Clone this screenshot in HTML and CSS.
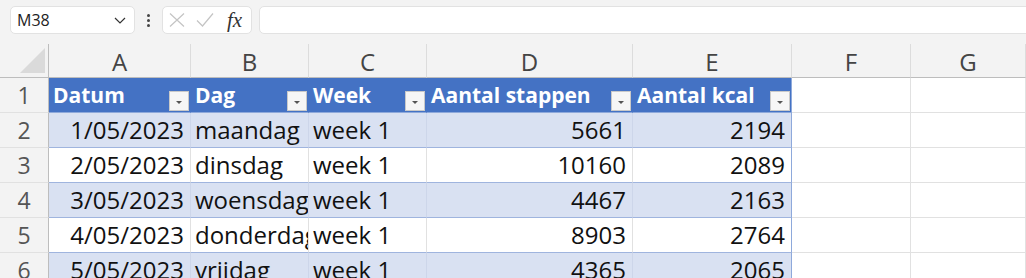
FILE: index.html
```html
<!DOCTYPE html>
<html lang="nl">
<head>
  <meta charset="UTF-8">
  <link rel="stylesheet" href="styles.css">
  <title>Stappen</title>
</head>
<body>
  <div class="toolbar">
    <div class="namebox">
      <span>M38</span>
      <svg width="12" height="7" viewBox="0 0 12 7"><path d="M1 1l5 5 5-5" fill="none" stroke="#333" stroke-width="1.2"/></svg>
    </div>
    <div class="grip"><i></i><i></i><i></i></div>
    <div class="fxbox">
      <svg width="16" height="14" viewBox="0 0 16 14"><path d="M1 0.5l14 13M15 0.5l-14 13" stroke="#c4c4c4" stroke-width="1.2" fill="none"/></svg>
      <svg width="18" height="14" viewBox="0 0 18 14"><path d="M1 7.5l5.5 5.5 10.5-12.5" stroke="#c4c4c4" stroke-width="1.2" fill="none"/></svg>
      <span class="fx">fx</span>
    </div>
    <div class="formula"></div>
  </div>

  <div class="sheet">
    <div class="corner"><svg width="25" height="25" viewBox="0 0 25 25"><path d="M25 0v25h-25z" fill="#dadada"/></svg></div>
    <div class="colhead">A</div>
    <div class="colhead">B</div>
    <div class="colhead">C</div>
    <div class="colhead">D</div>
    <div class="colhead">E</div>
    <div class="colhead">F</div>
    <div class="colhead">G</div>

    <div class="rowhead">1</div>
    <div class="th">Datum<span class="dd"></span></div>
    <div class="th">Dag<span class="dd"></span></div>
    <div class="th">Week<span class="dd"></span></div>
    <div class="th">Aantal stappen<span class="dd"></span></div>
    <div class="th last">Aantal kcal<span class="dd"></span></div>
    <div class="out first"></div>
    <div class="out first"></div>

    <div class="rowhead">2</div>
    <div class="cell band num">1/05/2023</div>
    <div class="cell band">maandag</div>
    <div class="cell band">week 1</div>
    <div class="cell band num">5661</div>
    <div class="cell band num last">2194</div>
    <div class="out"></div>
    <div class="out"></div>

    <div class="rowhead">3</div>
    <div class="cell num">2/05/2023</div>
    <div class="cell">dinsdag</div>
    <div class="cell">week 1</div>
    <div class="cell num">10160</div>
    <div class="cell num last">2089</div>
    <div class="out"></div>
    <div class="out"></div>

    <div class="rowhead">4</div>
    <div class="cell band num">3/05/2023</div>
    <div class="cell band">woensdag</div>
    <div class="cell band">week 1</div>
    <div class="cell band num">4467</div>
    <div class="cell band num last">2163</div>
    <div class="out"></div>
    <div class="out"></div>

    <div class="rowhead">5</div>
    <div class="cell num">4/05/2023</div>
    <div class="cell">donderdag</div>
    <div class="cell">week 1</div>
    <div class="cell num">8903</div>
    <div class="cell num last">2764</div>
    <div class="out"></div>
    <div class="out"></div>

    <div class="rowhead">6</div>
    <div class="cell band num">5/05/2023</div>
    <div class="cell band">vrijdag</div>
    <div class="cell band">week 1</div>
    <div class="cell band num">4365</div>
    <div class="cell band num last">2065</div>
    <div class="out"></div>
    <div class="out"></div>
  </div>
</body>
</html>
```

FILE: styles.css
```css
body {
  margin: 0;
  background-color: #f3f3f3;
  font-family: "Open Sans", sans-serif;
  overflow: hidden;
}

/* formula bar */
.toolbar {
  display: flex;
  align-items: center;
  height: 44px;
  box-sizing: border-box;
  padding: 0 0 4px 10px;
}

.namebox,
.fxbox,
.formula {
  height: 28px;
  box-sizing: border-box;
  background-color: #fff;
  border: 1px solid #e2e2e2;
  border-radius: 5px;
}

.namebox {
  display: flex;
  align-items: center;
  justify-content: space-between;
  width: 125px;
  padding: 0 8px 0 6px;
  font-size: 16px;
  color: #222;
}

.grip {
  display: flex;
  flex-direction: column;
  align-items: center;
  gap: 2px;
  width: 27px;
}

.grip i {
  width: 3px;
  height: 3px;
  border-radius: 50%;
  background-color: #444;
}

.fxbox {
  display: flex;
  align-items: center;
  width: 90px;
  padding-left: 6px;
  gap: 11px;
}

.fx {
  font-family: "Liberation Serif", serif;
  font-style: italic;
  font-size: 21px;
  color: #333;
  margin-left: 2px;
}

.formula {
  flex: 1;
  margin-left: 7px;
  margin-right: -10px;
}

/* grid */
.sheet {
  display: grid;
  grid-template-columns: 49px 142px 118px 118px 206px 159px 119px 1fr;
  grid-template-rows: 34px repeat(6, 35px);
  background-color: #fff;
}

.sheet > div {
  box-sizing: border-box;
  white-space: nowrap;
  overflow: hidden;
  line-height: 34px;
}

.corner {
  display: flex;
  justify-content: flex-end;
  align-items: flex-end;
  padding: 0 3px 4px 0;
  background-color: #f3f3f3;
  border-right: 1px solid #bdbdbd;
  border-bottom: 1px solid #bdbdbd;
}

.colhead {
  background-color: #f3f3f3;
  border-right: 1px solid #dcdcdc;
  border-bottom: 1px solid #bdbdbd;
  text-align: center;
  font-size: 24px;
  padding-top: 1px;
  color: #444;
}

.rowhead {
  background-color: #f3f3f3;
  border-right: 1px solid #bdbdbd;
  border-bottom: 1px solid #e1e1e1;
  text-align: center;
  font-size: 23px;
  color: #555;
}

.th {
  position: relative;
  background-color: #4472c4;
  color: #fff;
  font-weight: 700;
  font-size: 21px;
  padding-left: 4px;
  border-right: 1px solid #4472c4;
  border-bottom: 1px solid #8ea9db;
}

.dd {
  position: absolute;
  right: 1px;
  bottom: 1px;
  width: 20px;
  height: 20px;
  box-sizing: border-box;
  background-color: #f6f6f6;
  border: 1px solid #c9c9c9;
}

.dd::after {
  content: "";
  position: absolute;
  left: 6px;
  top: 9px;
  border-left: 3px solid transparent;
  border-right: 3px solid transparent;
  border-top: 3px solid #555;
}

.cell {
  font-size: 24px;
  color: #111;
  padding: 0 6px 0 4px;
  border-right: 1px solid #e1e1e1;
  border-bottom: 1px solid #9fb4de;
}

.cell.band {
  background-color: #d9e1f2;
  border-right-color: #cdd6ea;
}

.num {
  text-align: right;
}

.sheet > .last {
  border-right-color: #8ea9db;
}

.out {
  border-right: 1px solid #e1e1e1;
  border-bottom: 1px solid #e1e1e1;
}
```
